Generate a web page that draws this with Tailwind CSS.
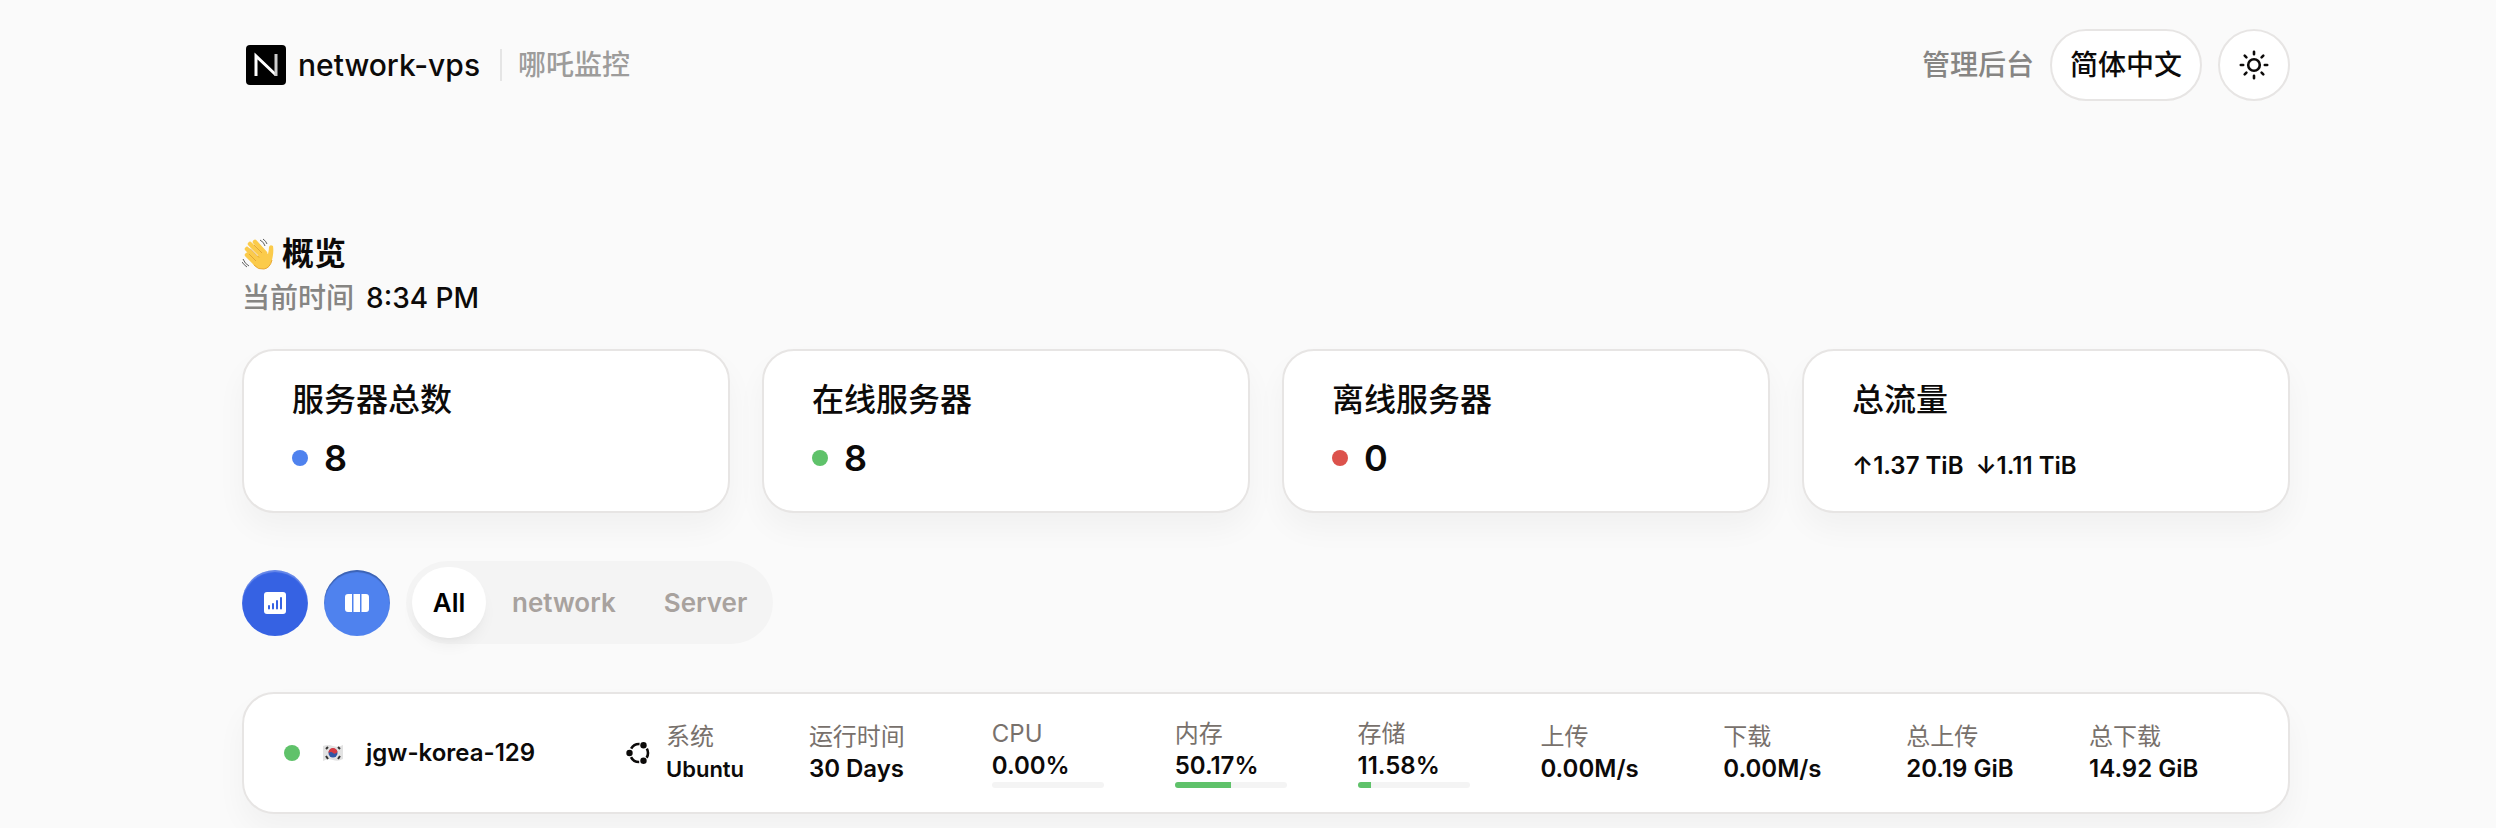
<!DOCTYPE html>
<html lang="zh-CN">
<head>
    <meta charset="UTF-8">
    <meta name="viewport" content="width=device-width, initial-scale=1.0">
    <title>network-vps | 哪吒监控</title>
    <script src="https://cdn.jsdelivr.net/npm/@tailwindcss/browser@4"></script>
</head>
<body class="min-h-screen pl-9 bg-[#fafafa] text-[#0c0a09] font-['Inter','Noto_Sans_CJK_SC',sans-serif]">
    <div class="mx-auto max-w-[2096px] px-6 pt-[29px]">
        <!-- Header -->
        <header class="flex items-center justify-between">
            <a href="#" class="flex items-center pl-1 text-[30px] font-medium">
                <svg class="w-10 h-10 mr-3" viewBox="0 0 40 40" aria-hidden="true">
                    <rect width="40" height="40" rx="4" fill="#000"/>
                    <path d="M10 31V11L30 30" fill="none" stroke="#fff" stroke-width="3"/>
                    <path d="M30 31V9" fill="none" stroke="#ccc" stroke-width="3"/>
                </svg>
                <span>network-vps</span>
                <span class="w-[2px] h-8 bg-[#e5e5e5] ml-5 mr-4"></span>
                <span class="text-[28px] text-[#9d9c9b]">哪吒监控</span>
            </a>
            <div class="flex items-center gap-4">
                <a href="#" class="text-[28px] font-medium text-[#868583]">管理后台</a>
                <button class="h-18 px-[18px] rounded-full border-2 border-[#e7e5e4] bg-white text-[28px] font-medium">简体中文</button>
                <button aria-label="切换主题" class="w-18 h-18 rounded-full border-2 border-[#e7e5e4] bg-white flex items-center justify-center">
                    <svg class="w-8 h-8" viewBox="0 0 32 32" fill="none" stroke="currentColor" stroke-width="2.6" stroke-linecap="round" aria-hidden="true">
                        <circle cx="16" cy="16" r="5.800"/>
                        <path d="M16 2.800V5.200M16 26.800V29.200M2.800 16H5.200M26.800 16H29.200M6.700 6.700L8.400 8.400M23.600 23.600L25.300 25.300M6.700 25.300L8.400 23.600M23.600 8.400L25.300 6.700"/>
                    </svg>
                </button>
            </div>
        </header>

        <!-- Overview -->
        <section class="mt-32">
            <h1 class="flex items-center gap-2 text-[32px] leading-[50px] font-semibold">
                <svg class="w-8 h-8" viewBox="0 0 32 32" aria-hidden="true">
                    <path d="M13 20L22 13L26 16Q27 12 27 9Q28 6 31 8Q32 14 30 22Q28 31 21 31Q15 31 11 26Z" fill="#fbcb4b"/>
                    <path d="M5 17L14 26M5 11L16 22M8 6L19 17M13 4L23 15" fill="none" stroke="#fbcb4b" stroke-width="4.500" stroke-linecap="round"/>
                    <path d="M7 16L14 23M8 10.500L17 19.500M12 7L20 15" fill="none" stroke="#dd9a2c" stroke-width="0.800"/>
                    <path d="M12 27Q16 32 22 31Q28 30 30 22" fill="none" stroke="#e9a834" stroke-width="1"/>
                    <path d="M18 2Q22 4 23 8M21 1Q24 3 25 6M1 21Q3 26 7 28M0 24Q2 27 5 29" fill="none" stroke="#5f5f5f" stroke-width="1"/>
                </svg>
                概览
            </h1>
            <p class="flex items-center gap-3 text-[28px] leading-[38px] font-medium">
                <span class="text-[#868583]">当前时间</span>
                <span>8:34 PM</span>
            </p>
        </section>

        <!-- Stat cards -->
        <section class="mt-8 grid grid-cols-4 gap-8">
            <div class="min-h-[164px] px-12 pt-[25px] rounded-[32px] border-2 border-[#e7e5e4] bg-white shadow-[0_16px_30px_rgb(0_0_0/0.04)]">
                <h2 class="text-[32px] leading-[48px] font-medium">服务器总数</h2>
                <p class="mt-[6px] flex items-center gap-4 text-[36px] leading-[56px] font-semibold"><span class="w-4 h-4 rounded-full bg-[#4f82ee]"></span>8</p>
            </div>
            <div class="min-h-[164px] px-12 pt-[25px] rounded-[32px] border-2 border-[#e7e5e4] bg-white shadow-[0_16px_30px_rgb(0_0_0/0.04)]">
                <h2 class="text-[32px] leading-[48px] font-medium">在线服务器</h2>
                <p class="mt-[6px] flex items-center gap-4 text-[36px] leading-[56px] font-semibold"><span class="w-4 h-4 rounded-full bg-[#5fc26a]"></span>8</p>
            </div>
            <div class="min-h-[164px] px-12 pt-[25px] rounded-[32px] border-2 border-[#e7e5e4] bg-white shadow-[0_16px_30px_rgb(0_0_0/0.04)]">
                <h2 class="text-[32px] leading-[48px] font-medium">离线服务器</h2>
                <p class="mt-[6px] flex items-center gap-4 text-[36px] leading-[56px] font-semibold"><span class="w-4 h-4 rounded-full bg-[#dc524c]"></span>0</p>
            </div>
            <div class="min-h-[164px] px-12 pt-[25px] rounded-[32px] border-2 border-[#e7e5e4] bg-white shadow-[0_16px_30px_rgb(0_0_0/0.04)]">
                <h2 class="text-[32px] leading-[48px] font-medium">总流量</h2>
                <p class="mt-[22px] flex items-center gap-3 text-[24px] leading-[40px] font-semibold"><span>↑1.37 TiB</span><span>↓1.11 TiB</span></p>
            </div>
        </section>

        <!-- Toolbar -->
        <section class="mt-12 flex items-center gap-4">
            <button aria-label="图表" class="w-[66px] h-[66px] rounded-full bg-[#3662e3] text-white flex items-center justify-center inset-shadow-[0_2px_1px_rgb(255_255_255/0.25)]">
                <svg class="w-[26px] h-[26px]" viewBox="0 0 26 26" aria-hidden="true">
                    <rect x="2" y="2" width="22" height="22" rx="3" fill="currentColor"/>
                    <path d="M7 18.500V16M11 18.500V14M15 18.500V11M19 18.500V8" stroke="#3662e3" stroke-width="2" stroke-linecap="round"/>
                </svg>
            </button>
            <button aria-label="列表" class="w-[66px] h-[66px] rounded-full bg-[#4f82ee] text-white flex items-center justify-center inset-shadow-[0_2px_1px_rgb(0_0_0/0.25)]">
                <svg class="w-[26px] h-[26px]" viewBox="0 0 26 26" fill="currentColor" aria-hidden="true">
                    <path d="M4 4H8V22H4Q1 22 1 19V7Q1 4 4 4ZM9.500 4H16V22H9.500ZM17.500 4H22Q25 4 25 7V19Q25 22 22 22H17.500Z"/>
                </svg>
            </button>
            <nav class="flex items-center p-[6px] rounded-full bg-[#f4f4f4] text-[26px] font-semibold text-[#a8a29e]">
                <button class="w-[74px] h-[71px] rounded-full bg-white text-black shadow-lg shadow-black/5">All</button>
                <button class="h-[71px] pl-[26px] pr-6">network</button>
                <button class="h-[71px] pl-6 pr-5">Server</button>
            </nav>
        </section>

        <!-- Server row -->
        <section class="mt-12 min-h-[122px] pl-10 pr-4 flex items-center rounded-[32px] border-2 border-[#e7e5e4] bg-white shadow-[0_16px_30px_rgb(0_0_0/0.04)]">
            <div class="w-[342px] flex items-center">
                <span class="w-4 h-4 rounded-full bg-[#5fc26a]"></span>
                <svg class="w-[22px] h-[18px] ml-[22px] mr-[22px]" viewBox="0 0 22 18" aria-hidden="true">
                    <path d="M1 2Q6 0 11 2T21 1V15Q16 18 11 16T1 17Z" fill="#e2e2e2"/>
                    <circle cx="11" cy="9" r="4.500" fill="#3157a5"/>
                    <path d="M6.500 9A4.500 4.500 0 0 1 15.500 8Q13 11 11 9T6.500 9Z" fill="#d63b42"/>
                    <path d="M4 5L6 3M16 3L18 5M4 12L6 15M16 15L18 12" stroke="#333" stroke-width="2"/>
                </svg>
                <h3 class="text-[24px] font-semibold">jgw-korea-129</h3>
            </div>
            <div class="flex-1 grid grid-cols-9 items-center text-[24px] leading-8 font-semibold">
                <div class="flex items-center gap-4">
                    <svg class="w-6 h-6" viewBox="0 0 24 24" aria-hidden="true">
                        <circle cx="13" cy="12" r="9" fill="none" stroke="currentColor" stroke-width="2.600" stroke-dasharray="10 8.850" stroke-dashoffset="5"/>
                        <circle cx="3.500" cy="12" r="3.200" fill="currentColor"/>
                        <circle cx="17.500" cy="4.200" r="3.200" fill="currentColor"/>
                        <circle cx="17.500" cy="19.800" r="3.200" fill="currentColor"/>
                    </svg>
                    <div><p class="font-normal text-[#78716c]">系统</p><p class="text-[22px]">Ubuntu</p></div>
                </div>
                <div><p class="font-normal text-[#78716c]">运行时间</p><p>30 Days</p></div>
                <div>
                    <p class="font-normal text-[#78716c]">CPU</p><p>0.00%</p>
                    <div class="w-28 h-[6px] rounded-full bg-[#f4f4f4] overflow-hidden"><div class="h-full bg-[#5fc26a]" style="width: 0%"></div></div>
                </div>
                <div>
                    <p class="font-normal text-[#78716c]">内存</p><p>50.17%</p>
                    <div class="w-28 h-[6px] rounded-full bg-[#f4f4f4] overflow-hidden"><div class="h-full bg-[#5fc26a]" style="width: 50.17%"></div></div>
                </div>
                <div>
                    <p class="font-normal text-[#78716c]">存储</p><p>11.58%</p>
                    <div class="w-28 h-[6px] rounded-full bg-[#f4f4f4] overflow-hidden"><div class="h-full bg-[#5fc26a]" style="width: 11.58%"></div></div>
                </div>
                <div><p class="font-normal text-[#78716c]">上传</p><p>0.00M/s</p></div>
                <div><p class="font-normal text-[#78716c]">下载</p><p>0.00M/s</p></div>
                <div><p class="font-normal text-[#78716c]">总上传</p><p>20.19 GiB</p></div>
                <div><p class="font-normal text-[#78716c]">总下载</p><p>14.92 GiB</p></div>
            </div>
        </section>
    </div>
</body>
</html>
